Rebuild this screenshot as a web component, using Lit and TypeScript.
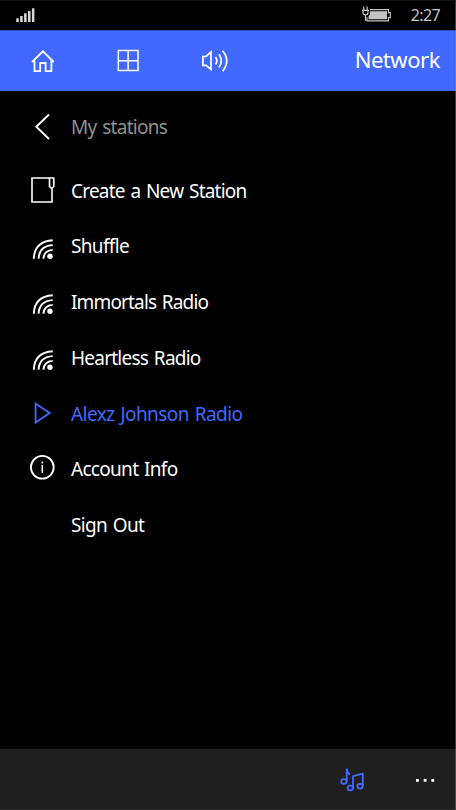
import { LitElement, html, css, svg } from "lit";
import { customElement } from "lit/decorators.js";
import { classMap } from "lit/directives/class-map.js";
import { styleMap } from "lit/directives/style-map.js";

const icons = {
  signal: svg`<svg width="22" height="16" viewBox="15 7 22 16" fill="#d8d8d8"><path d="M16.3 18.3h2.5v3.7h-2.5zM20.2 16h2.5v6h-2.5zM24.1 13.3h2.5v8.7h-2.5zM28 10.9h2.5v11.1h-2.5zM31.9 8.2h2.5v13.8h-2.5z"/></svg>`,
  battery: svg`<svg width="32" height="20" viewBox="361 5 32 20" fill="none" stroke="#c4c4c4"><path d="M363.8 6.5v4M367.2 6.5v4M362 10.3h7M363 10.5v2.2q0 2 2.5 2.2q2.5-.2 2.5-2.2v-2.2M365.5 15v6" stroke-width="1.2"/><path d="M370 9.6h18.5v3h1.8v5h-1.8v3.2h-21.5v-3.6" stroke-width="1.2"/><path d="M370 11.2h17v8h-18.5v-3q1.5-1 1.5-3z" fill="#c4c4c4" stroke="none"/></svg>`,
  home: svg`<svg width="26" height="26" viewBox="30 48 26 26" fill="none" stroke="#fff" stroke-width="1.8"><path d="M32.1 62L42.9 51.3L53.7 62M34.5 60.5V71.2H40.2V63H45.6V71.2H51.4V60.5"/></svg>`,
  grid: svg`<svg width="26" height="26" viewBox="115 47 26 26" fill="none" stroke="#fff" stroke-width="1.5"><path d="M118.3 49.5H138V69.5H118.3ZM128.1 49.5V69.5M118.3 59.8H138"/></svg>`,
  sound: svg`<svg width="30" height="26" viewBox="200 48 30 26" fill="none" stroke="#fff" stroke-width="1.7"><path d="M202.9 56.5H206L211 52V69.5L206 65.3H202.9ZM215.5 57Q218.2 60.8 215.5 64.6M219 54.2Q223.6 60.8 219 67.4M222.5 50.8Q231 60.8 222.5 71.3"/></svg>`,
  back: svg`<svg width="28" height="30" viewBox="28 112 28 30" fill="none" stroke="#fff" stroke-width="1.9"><path d="M49 114.5L36.3 126.7L49 139"/></svg>`,
  create: svg`<svg width="28" height="30" viewBox="28 176 28 30" fill="none" stroke="#fff" stroke-width="1.6"><path d="M49.5 178H32V202H52V188.5M49.5 178H53.8V186.5L51.6 188.6L49.5 186.5Z"/></svg>`,
  radio: svg`<svg width="28" height="30" viewBox="28 231.5 28 30" fill="none" stroke="#fff" stroke-width="1.9"><path d="M33.8 258.2Q34.5 241 52.7 239.8M38.6 258.2Q39.2 245.4 52.7 244.6M43.4 258.2Q44 250 52.7 249.4"/><circle cx="50" cy="255.7" r="2.7" fill="#fff" stroke="none"/></svg>`,
  play: svg`<svg width="28" height="30" viewBox="28 398.5 28 30" fill="none" stroke="#4169ff" stroke-width="1.8"><path d="M35.6 403.2V422L49.7 412.6Z"/></svg>`,
  info: svg`<svg width="28" height="30" viewBox="28 454.3 28 30" fill="none" stroke="#fff"><circle cx="42.3" cy="467.6" r="11.4" stroke-width="1.8"/><path d="M42.3 465.2V473.2M42.3 461.8V463.7" stroke-width="1.6"/></svg>`,
  music: svg`<svg width="28" height="28" viewBox="338 766 28 28" fill="none" stroke="#4169ff" stroke-width="1.8"><ellipse cx="343.9" cy="781.5" rx="2.7" ry="2.3"/><path d="M346.7 781.5V768.5Q346.8 772 349.8 774.5"/><ellipse cx="350.3" cy="788" rx="2.7" ry="2.3"/><ellipse cx="360" cy="786.3" rx="2.7" ry="2.3"/><path d="M353 788V776.2L362.8 773.7V786.3"/></svg>`,
  more: svg`<svg width="22" height="6" viewBox="415 777 22 6" fill="#fff"><path d="M416 779h2.8v2.8h-2.8zM423.7 779h2.8v2.8h-2.8zM431.4 779h2.8v2.8h-2.8z"/></svg>`,
};

const items = [
  { label: "Create a New Station", icon: icons.create, tracking: -0.78 },
  { label: "Shuffle", icon: icons.radio, tracking: -0.65 },
  { label: "Immortals Radio", icon: icons.radio, tracking: -0.85 },
  { label: "Heartless Radio", icon: icons.radio, tracking: -0.76 },
  { label: "Alexz Johnson Radio", icon: icons.play, tracking: -0.57, active: true },
  { label: "Account Info", icon: icons.info, tracking: -0.7 },
  { label: "Sign Out", icon: null, tracking: -0.68 },
];

@customElement("app-root")
export class AppRoot extends LitElement {
  static styles = css`
    :host {
      display: flex;
      flex-direction: column;
      position: relative;
      box-sizing: border-box;
      width: 456px;
      height: 810px;
      background: #000;
      color: #fff;
      font-family: "Noto Sans", "Open Sans", sans-serif;
      overflow: hidden;
    }
    :host::after {
      content: "";
      position: absolute;
      inset: 0;
      border-right: 1px solid rgba(150, 150, 150, 0.4);
      border-top: 1px solid rgba(150, 150, 150, 0.12);
      border-bottom: 1px solid rgba(150, 150, 150, 0.12);
      pointer-events: none;
    }
    svg { display: block; flex: none; }
    .status {
      display: flex;
      align-items: center;
      height: 30px;
      padding: 0 16px 0 15px;
      color: #c4c4c4;
      font-size: 16px;
      line-height: 30px;
      letter-spacing: -0.6px;
    }
    .battery { margin-left: auto; margin-right: 18px; }
    .nav {
      display: flex;
      align-items: center;
      box-sizing: border-box;
      height: 61px;
      padding: 0 16px 0 30px;
      border-top: 1px solid #2f4cba;
      background: #4169ff;
    }
    .nav svg { margin-top: -1px; }
    .grid { margin: 0 59px; }
    .title {
      margin-left: auto;
      padding-bottom: 4px;
      font-size: 22px;
      line-height: 56px;
      letter-spacing: -0.45px;
    }
    .content { flex: 1; }
    .row {
      display: flex;
      align-items: center;
      height: 55.7px;
      padding-left: 28px;
      font-size: 19px;
      letter-spacing: -0.72px;
      word-spacing: 1.5px;
    }
    .heading { height: 72px; color: #909090; }
    .icon { width: 28px; height: 30px; margin-right: 15px; }
    .label { white-space: nowrap; line-height: 26px; padding-bottom: 0.2px; }
    .active { color: #4169ff; }
    .bar {
      display: flex;
      align-items: center;
      justify-content: flex-end;
      gap: 49px;
      height: 61px;
      padding-right: 19px;
      box-sizing: border-box;
      background: #1f1f1f;
    }
  `;

  render() {
    return html`
      <div class="status">
        ${icons.signal}
        <div class="battery">${icons.battery}</div>
        <span>2:27</span>
      </div>
      <nav class="nav">
        ${icons.home}
        <div class="grid">${icons.grid}</div>
        ${icons.sound}
        <span class="title">Network</span>
      </nav>
      <main class="content">
        <div class="row heading">
          <div class="icon">${icons.back}</div>
          <span class="label">My stations</span>
        </div>
        ${items.map(
          (item) => html`
            <div class=${classMap({ row: true, active: !!item.active })}>
              <div class="icon">${item.icon}</div>
              <span class="label" style=${styleMap({ letterSpacing: `${item.tracking}px` })}>${item.label}</span>
            </div>
          `
        )}
      </main>
      <footer class="bar">${icons.music}${icons.more}</footer>
    `;
  }
}
